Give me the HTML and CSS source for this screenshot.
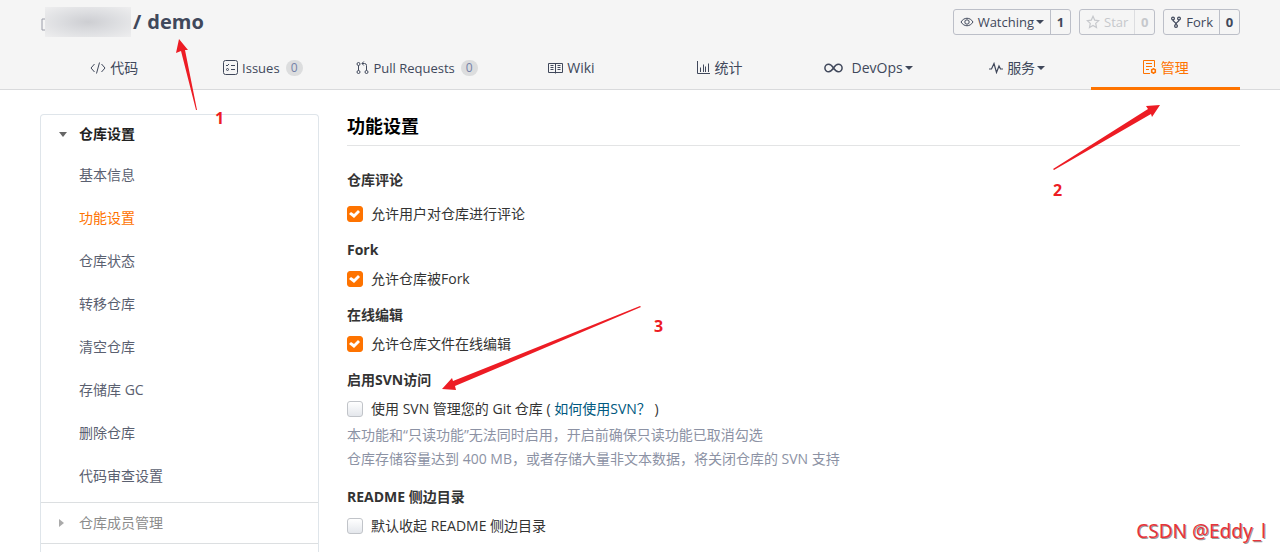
FILE: index.html
```
<!DOCTYPE html>
<html lang="zh-CN">
<head>
  <meta charset="UTF-8">
  <meta name="viewport" content="width=device-width, initial-scale=1.0">
  <title>功能设置 - demo</title>
  <link rel="stylesheet" href="styles.css">
</head>
<body>
  <header class="header">
    <div class="wrap project-bar">
      <h1 class="project-title">
        <svg class="repo-icon" width="4" height="14" viewBox="0 0 4 14"><path d="M4 1H1v11h3" fill="none" stroke="#9a9ca8"/></svg>
        <span class="owner-mask"></span>
        <span class="slash">/</span>
        <a href="#">demo</a>
      </h1>
      <div class="actions">
        <div class="action">
          <button type="button">
            <svg width="14" height="14" viewBox="0 0 14 14" fill="none" stroke="currentColor"><path d="M1 7c3-5 9-5 12 0c-3 5-9 5-12 0z"/><circle cx="7" cy="7" r="2.2"/></svg>
            <span>Watching</span><i class="caret"></i>
          </button>
          <a href="#">1</a>
        </div>
        <div class="action disabled">
          <button type="button" disabled>
            <svg width="14" height="14" viewBox="0 0 14 14" fill="none" stroke="currentColor" stroke-width="1.2"><path d="M7 1.3l1.7 3.8 4 .5-3 2.8.8 4.1L7 10.4l-3.5 2.1.8-4.1-3-2.8 4-.5z"/></svg>
            <span>Star</span>
          </button>
          <a href="#">0</a>
        </div>
        <div class="action">
          <button type="button">
            <svg width="12" height="14" viewBox="0 0 12 14" fill="none" stroke="currentColor" stroke-width="1.2"><circle cx="3" cy="3.5" r="1.4"/><circle cx="9" cy="3.5" r="1.4"/><circle cx="6" cy="11" r="1.4"/><path d="M3 5c0 2 3 1.500 3 4.500M9 5c0 2-3 1.500-3 4.500"/></svg>
            <span>Fork</span>
          </button>
          <a href="#">0</a>
        </div>
      </div>
    </div>

    <nav class="wrap tabs">
      <a href="#">
        <svg width="16" height="14" viewBox="0 0 16 14" fill="none" stroke="currentColor"><path d="M4.500 3L1 7l3.500 4M11.500 3L15 7l-3.500 4M9.500 1.500l-3 11"/></svg>
        代码
      </a>
      <a href="#" class="counted">
        <svg width="15" height="15" viewBox="0 0 15 15" fill="none" stroke="currentColor"><rect x=".5" y=".5" width="14" height="14" rx="2"/><path d="M3 5l1 1 2-2M8 5.500h4M8 9.500h4"/><circle cx="4.500" cy="9.500" r="1"/></svg>
        Issues <span class="count">0</span>
      </a>
      <a href="#" class="counted">
        <svg width="13" height="14" viewBox="0 0 13 14" fill="none" stroke="currentColor"><circle cx="2.500" cy="3" r="1.500"/><circle cx="2.500" cy="11" r="1.500"/><circle cx="10.500" cy="11" r="1.500"/><path d="M2.500 4.500v5M10.500 9.500V4.500q0-2-2-2H6M7.800.5L6 2.500l1.800 2"/></svg>
        Pull Requests <span class="count">0</span>
      </a>
      <a href="#">
        <svg width="15" height="12" viewBox="0 0 15 12" fill="none" stroke="currentColor"><path d="M.5 1.500h14v9H.5zM7.500 1.500v10M2.500 3.500h3M2.500 5.500h3M2.500 7.500h3M9.500 3.500h3M9.500 5.500h3M9.500 7.500h3"/></svg>
        Wiki
      </a>
      <a href="#">
        <svg width="13" height="13" viewBox="0 0 13 13" fill="none" stroke="currentColor"><path d="M.5 0v12.500H13M3.500 6.500V11M6.500 3.500V11M8.500 5.500V11M11.500 2.500V11"/></svg>
        统计
      </a>
      <a href="#">
        <svg class="wide" width="19" height="10" viewBox="0 0 19 10" fill="none" stroke="currentColor" stroke-width="1.500"><path d="M9.500 5C7.500 2 6.500 1.200 4.700 1.200a3.800 3.800 0 0 0 0 7.600C6.500 8.800 7.500 8 9.500 5s3-3.800 4.800-3.800a3.800 3.800 0 0 1 0 7.600C12.500 8.800 11.500 8 9.500 5z"/></svg>
        DevOps<i class="caret"></i>
      </a>
      <a href="#">
        <svg width="14" height="12" viewBox="0 0 14 12" fill="none" stroke="currentColor" stroke-width="1.200"><path d="M0 7h2.500L5 1.500l2.500 9L10 4l1.500 3H14"/></svg>
        服务<i class="caret"></i>
      </a>
      <a href="#" class="active">
        <svg width="14" height="15" viewBox="0 0 14 15" fill="none" stroke="currentColor"><path d="M11.500 7V.5H.5v13H7M3 3.500h6M3 6.500h6M3 9.500h3"/><circle cx="10.500" cy="11" r="1.900" stroke-width="1.500"/><path d="M10.500 8v1M10.500 13v1M7.900 9.500l.9.500M13.100 9.500l-.9.500M7.900 12.500l.9-.5M13.100 12.500l-.9-.5"/></svg>
        管理
      </a>
    </nav>
  </header>

  <div class="wrap content">
    <aside class="sidebar">
      <div class="menu-title open"><i></i>仓库设置</div>
      <ul class="menu">
        <li><a href="#">基本信息</a></li>
        <li><a href="#" class="active">功能设置</a></li>
        <li><a href="#">仓库状态</a></li>
        <li><a href="#">转移仓库</a></li>
        <li><a href="#">清空仓库</a></li>
        <li><a href="#">存储库 GC</a></li>
        <li><a href="#">删除仓库</a></li>
        <li><a href="#">代码审查设置</a></li>
      </ul>
      <div class="menu-title closed"><i></i>仓库成员管理</div>
    </aside>

    <main class="settings">
      <h2>功能设置</h2>
      <section class="first">
        <h3>仓库评论</h3>
        <div class="option">
          <input type="checkbox" id="comment" checked>
          <label for="comment">允许用户对仓库进行评论</label>
        </div>
      </section>
      <section>
        <h3>Fork</h3>
        <div class="option">
          <input type="checkbox" id="fork" checked>
          <label for="fork">允许仓库被Fork</label>
        </div>
      </section>
      <section>
        <h3>在线编辑</h3>
        <div class="option">
          <input type="checkbox" id="edit" checked>
          <label for="edit">允许仓库文件在线编辑</label>
        </div>
      </section>
      <section>
        <h3>启用SVN访问</h3>
        <div class="option">
          <input type="checkbox" id="svn">
          <label for="svn">使用 SVN 管理您的 Git 仓库 ( <a href="#">如何使用SVN？</a> )</label>
        </div>
        <p class="hint">本功能和“只读功能”无法同时启用，开启前确保只读功能已取消勾选<br>仓库存储容量达到 400 MB，或者存储大量非文本数据，将关闭仓库的 SVN 支持</p>
      </section>
      <section>
        <h3>README 侧边目录</h3>
        <div class="option">
          <input type="checkbox" id="readme">
          <label for="readme">默认收起 README 侧边目录</label>
        </div>
      </section>
    </main>
  </div>

  <!-- step annotations -->
  <div class="note note-1">
    <svg width="24" height="72" viewBox="0 0 24 72"><path d="M4 0L13 11 10 11 22 71 21 71 6 12 1 14z"/></svg>
    <b>1</b>
  </div>
  <div class="note note-2">
    <svg width="108" height="66" viewBox="0 0 108 66"><path d="M107 1L99 13 98 10 1 66 0 65 95 5 93 2z"/></svg>
    <b>2</b>
  </div>
  <div class="note note-3">
    <svg width="200" height="86" viewBox="0 0 200 86"><path d="M0 84L10 73 11 76 198 1 199 2 13 81 14 85z"/></svg>
    <b>3</b>
  </div>
  <div class="watermark">CSDN @Eddy_l</div>
</body>
</html>
```

FILE: styles.css
```
* {
  box-sizing: border-box;
}

body {
  margin: 0;
  height: 100vh;
  display: flex;
  flex-direction: column;
  overflow: hidden;
  position: relative;
  background: #fff;
  color: #333;
  font-family: "Open Sans", "Noto Sans CJK SC", sans-serif;
  font-size: 14px;
  line-height: 20px;
}

a {
  color: inherit;
  text-decoration: none;
}

h1, h2, h3, p, ul {
  margin: 0;
  padding: 0;
}

.wrap {
  width: 100%;
  padding: 0 40px;
}

.header {
  background: #f5f5f5;
  border-bottom: 1px solid #d9dadc;
  color: #40485b;
}

.project-bar {
  height: 46px;
  display: flex;
  justify-content: space-between;
}

.project-title {
  display: flex;
  height: 44px;
  align-items: center;
  font-size: 20px;
  line-height: 24px;
}

.repo-icon {
  margin: 6px 0 0 1px;
}

.owner-mask {
  width: 86px;
  height: 30px;
  background: radial-gradient(ellipse at center, #cdced2 0%, #dcdde0 45%, #eeeeef 100%);
}

.slash {
  margin: 0 6px 0 2px;
}

.actions {
  display: flex;
  gap: 8px;
  padding-top: 9px;
}

.action {
  display: flex;
  height: 26px;
  border: 1px solid #bcbfc8;
  border-radius: 3px;
}

.action button {
  display: flex;
  align-items: center;
  gap: 4px;
  padding: 0 6px;
  border: 0;
  background: none;
  color: #40485b;
  font: inherit;
  font-size: 13px;
}

.action button .caret {
  margin-left: -2px;
}

.action a {
  min-width: 20px;
  border-left: 1px solid #bcbfc8;
  font-size: 13px;
  font-weight: bold;
  line-height: 24px;
  text-align: center;
}

.disabled button,
.disabled a {
  color: #c6c8cc;
}

.disabled a {
  border-left-color: #dcdde0;
}

.caret {
  border: 4px solid transparent;
  border-top-color: currentColor;
  border-bottom: 0;
}

/* the pull request tab is a bit wider than the others */
.tabs {
  display: grid;
  grid-template-columns: 13fr 13fr 14fr repeat(5, 13fr);
}

.tabs a {
  display: flex;
  align-items: center;
  justify-content: center;
  gap: 4px;
  height: 44px;
  margin-bottom: -1px;
  padding-top: 2px;
  border-bottom: 3px solid transparent;
  white-space: nowrap;
}

.tabs .counted {
  font-size: 13px;
}

.tabs .wide {
  margin-right: 4px;
}

.tabs .caret {
  margin-left: -2px;
}

.tabs .active {
  color: #fe7300;
  border-bottom-color: #fe7300;
}

.count {
  min-width: 17px;
  height: 16px;
  margin-left: 2px;
  border-radius: 8px;
  background: #dcddde;
  color: #7481a8;
  font-size: 12px;
  line-height: 16px;
  text-align: center;
}

.content {
  flex: 1;
  min-height: 0;
  display: flex;
  gap: 28px;
  padding-top: 24px;
}

.sidebar {
  flex: none;
  width: 279px;
  border: 1px solid #dfe5ea;
  border-bottom: 0;
  border-radius: 4px 4px 0 0;
}

.menu-title {
  display: flex;
  align-items: center;
  height: 38px;
  padding-left: 18px;
}

.menu-title i {
  width: 8px;
  margin-right: 12px;
}

.open {
  color: #222;
  font-weight: bold;
}

.open i {
  border: 4px solid transparent;
  border-top: 5px solid #666;
  border-bottom: 0;
}

.closed {
  height: 42px;
  border: solid #dcdfe1;
  border-width: 1px 0;
  color: #8c8c8c;
}

.closed i {
  border: 4px solid transparent;
  border-left: 5px solid #aaa;
  border-right: 0;
}

.menu {
  list-style: none;
  padding-bottom: 5px;
}

.menu a {
  display: block;
  padding-left: 38px;
  color: #5a6070;
  line-height: 43px;
}

.menu .active {
  color: #fe7300;
}

.settings {
  flex: 1;
}

h2 {
  margin-bottom: 24px;
  padding-bottom: 7px;
  border-bottom: 1px solid #e3e4e5;
  color: #000;
  font-size: 18px;
  line-height: 24px;
}

h3 {
  margin-bottom: 9px;
  font-size: 14px;
  line-height: 20px;
}

section {
  margin-bottom: 16px;
}

.first h3 {
  margin-bottom: 14px;
}

.option {
  display: flex;
  align-items: center;
  gap: 8px;
}

.option a {
  color: #005980;
}

input[type="checkbox"] {
  appearance: none;
  width: 16px;
  height: 16px;
  margin: 0;
  border: 1px solid #c1c4c9;
  border-radius: 3px;
  background: linear-gradient(#fff, #e4e7ec);
}

input[type="checkbox"]:checked {
  border-color: #fe7300;
  background: #fe7300;
}

input[type="checkbox"]:checked::after {
  content: "";
  display: block;
  height: 14px;
  background: #fff;
  clip-path: polygon(1px 7px, 3px 5px, 6px 7px, 10px 3px, 12px 5px, 6px 11px);
}

.hint {
  margin-top: 4px;
  color: #8c92a4;
  line-height: 24px;
}

.note {
  position: absolute;
  color: #ed1c24;
  fill: #ed1c24;
}

.note svg {
  display: block;
}

.note b {
  position: absolute;
  font-size: 16px;
}

.note-1 {
  left: 175px;
  top: 39px;
}

.note-1 b {
  left: 40px;
  top: 69px;
}

.note-2 {
  right: 119px;
  top: 104px;
}

.note-2 b {
  left: 0;
  top: 76px;
}

.note-3 {
  left: 442px;
  top: 305px;
}

.note-3 b {
  left: 212px;
  top: 11px;
}

.watermark {
  position: absolute;
  right: 14px;
  bottom: 8px;
  color: #e8343a;
  font-family: "Noto Sans", sans-serif;
  font-size: 19px;
  line-height: 26px;
  text-shadow: 1px 1px 0 #999;
}
```
